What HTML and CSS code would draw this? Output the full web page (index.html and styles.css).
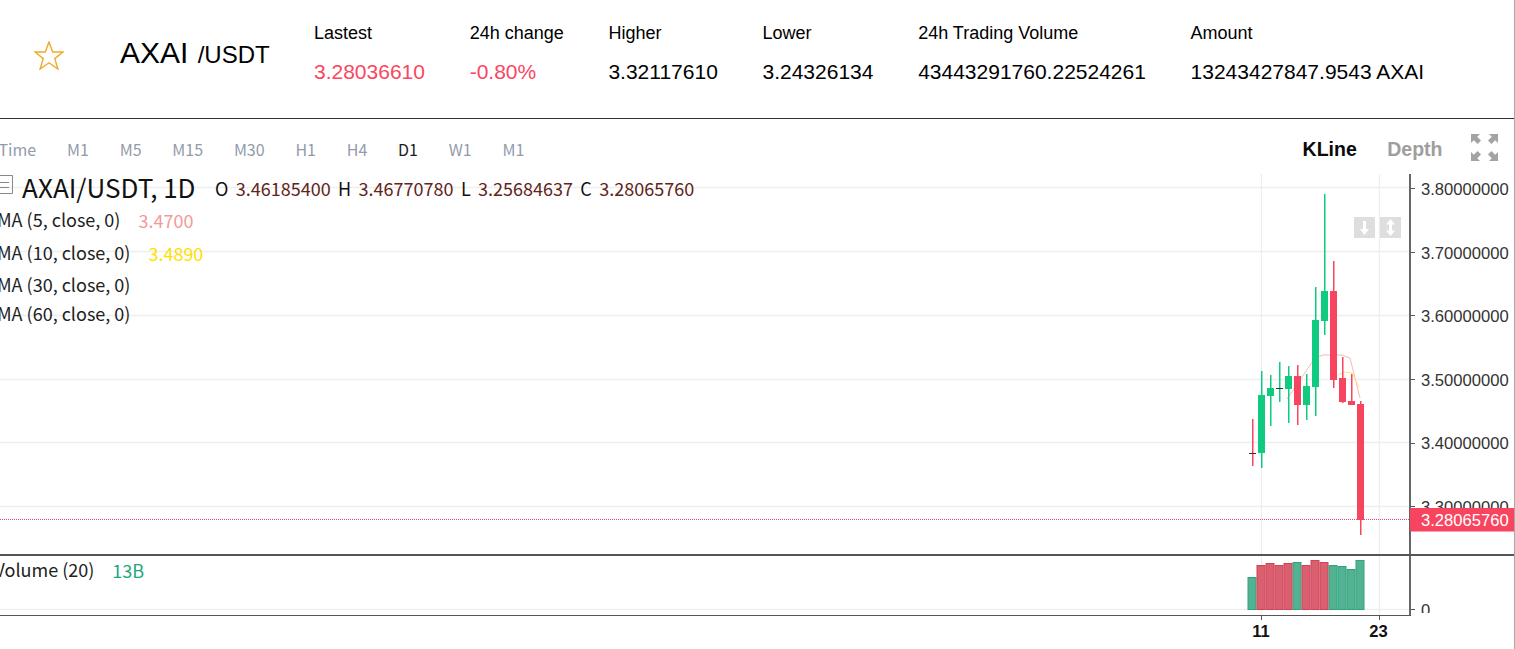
FILE: index.html
```html
<!DOCTYPE html>
<html lang="en">
<head>
<meta charset="utf-8">
<title>AXAI/USDT</title>
<link rel="stylesheet" href="styles.css">
</head>
<body>
<div class="page">
  <header class="ticker">
    <svg class="star" viewBox="0 0 30 29" width="30" height="29"><polygon points="15,1 18.7,11 29,11 20.8,17.6 23.9,28 15,21.8 6.1,28 9.2,17.6 1,11 11.3,11" fill="none" stroke="#f0a92a" stroke-width="1.4"/></svg>
    <h1 class="pair">AXAI <small>/USDT</small></h1>
    <div class="stats">
      <div class="stat"><span class="label">Lastest</span><span class="value down">3.28036610</span></div>
      <div class="stat"><span class="label">24h change</span><span class="value down">-0.80%</span></div>
      <div class="stat"><span class="label">Higher</span><span class="value">3.32117610</span></div>
      <div class="stat"><span class="label">Lower</span><span class="value">3.24326134</span></div>
      <div class="stat"><span class="label">24h Trading Volume</span><span class="value">43443291760.22524261</span></div>
      <div class="stat"><span class="label">Amount</span><span class="value">13243427847.9543 AXAI</span></div>
    </div>
  </header>
  <section class="panel">
    <div class="toolbar">
      <nav class="periods">
        <span>Time</span><span>M1</span><span>M5</span><span>M15</span><span>M30</span><span>H1</span><span>H4</span><span class="on">D1</span><span>W1</span><span>M1</span>
      </nav>
      <div class="views">
        <span class="view on">KLine</span>
        <span class="view">Depth</span>
        <svg class="expand" viewBox="0 0 27 27" width="27" height="27" fill="#a3a3a3">
          <polygon points="0,0 9,0 6.2,2.8 10,6.6 6.6,10 2.8,6.2 0,9"/>
          <polygon points="27,0 18,0 20.8,2.8 17,6.6 20.4,10 24.2,6.2 27,9"/>
          <polygon points="0,27 9,27 6.2,24.2 10,20.4 6.6,17 2.8,20.8 0,18"/>
          <polygon points="27,27 18,27 20.8,24.2 17,20.4 20.4,17 24.2,20.8 27,18"/>
        </svg>
      </div>
    </div>
    <div class="chart">
      <svg class="plot" viewBox="0 174 1515 475" width="1515" height="475">
        <defs><clipPath id="volclip"><rect x="1410" y="556" width="105" height="57"/></clipPath></defs>
        <g class="grid">
          <path d="M0 187.5H1410M0 251.5H1410M0 315.5H1410M0 379.5H1410M0 442.5H1410M0 506.5H1410M0 609.5H1410M1261.5 174V615M1379.5 174V615"/>
        </g>
        <path class="ma5" d="M1287 399L1315 358L1323 355H1342L1350 358L1360 398"/>
        <path class="ma10" d="M1338 375L1345 372L1352 373L1359 387"/>
        <g class="up">
          <rect x="1261" y="371" width="1.5" height="97"/><rect x="1258" y="395" width="7" height="58"/>
          <rect x="1270" y="375" width="1.5" height="51"/><rect x="1267" y="388" width="7" height="8"/>
          <rect x="1288" y="366" width="1.5" height="57"/><rect x="1285" y="376" width="7" height="13"/>
          <rect x="1306" y="374" width="1.5" height="46"/><rect x="1303" y="386" width="7" height="19"/>
          <rect x="1315" y="287" width="1.5" height="129"/><rect x="1312" y="320" width="7" height="67"/>
          <rect x="1324" y="194" width="1.5" height="141"/><rect x="1321" y="291" width="7" height="30"/>
          <rect x="1279" y="362" width="1.5" height="40"/>
        </g>
        <g class="dn">
          <rect x="1252" y="419" width="1.5" height="47"/>
          <rect x="1297" y="365" width="1.5" height="60"/><rect x="1294" y="376" width="7" height="29"/>
          <rect x="1333" y="261" width="1.5" height="127"/><rect x="1330" y="291" width="7" height="89"/>
          <rect x="1342" y="357" width="1.5" height="46"/><rect x="1339" y="378" width="7" height="24"/>
          <rect x="1351" y="374" width="1.5" height="31"/><rect x="1348" y="401" width="7" height="4"/>
          <rect x="1360" y="401" width="1.5" height="134"/><rect x="1357" y="404" width="7" height="116"/>
        </g>
        <path class="doji" d="M1249 453.5H1256M1276 388.5H1283"/>
        <g class="vol-up">
          <rect x="1248" y="577.5" width="8" height="32"/><rect x="1293" y="562.5" width="8" height="47"/>
          <rect x="1329" y="565.5" width="8" height="44"/><rect x="1338" y="566.5" width="8" height="43"/>
          <rect x="1347" y="569.5" width="8" height="40"/><rect x="1356" y="560.5" width="8" height="49"/>
        </g>
        <g class="vol-dn">
          <rect x="1257" y="565.5" width="8" height="44"/><rect x="1266" y="563.5" width="8" height="46"/>
          <rect x="1275" y="565.5" width="8" height="44"/><rect x="1284" y="563.5" width="8" height="46"/>
          <rect x="1302" y="565.5" width="8" height="44"/><rect x="1311" y="560.5" width="8" height="49"/>
          <rect x="1320" y="562.5" width="8" height="47"/>
        </g>
        <path class="lastline" d="M0 519.5H1410"/>
        <path class="frame" d="M1410 174V616"/>
        <path class="divider" d="M0 555H1515"/>
        <path class="baseline" d="M0 615.5H1411"/>
        <path class="ticks" d="M1411 188.5H1415M1411 252.5H1415M1411 315.5H1415M1411 379.5H1415M1411 443.5H1415M1411 506.5H1415M1411 609.5H1415M1261.5 616V620M1379.5 616V620"/>
        <g class="ylabels">
          <text x="1421" y="195">3.80000000</text>
          <text x="1421" y="259">3.70000000</text>
          <text x="1421" y="322">3.60000000</text>
          <text x="1421" y="386">3.50000000</text>
          <text x="1421" y="449">3.40000000</text>
          <text x="1421" y="513">3.30000000</text>
          <text x="1421" y="616" clip-path="url(#volclip)">0</text>
        </g>
        <rect class="pricebox" x="1410" y="508" width="105" height="23.5"/>
        <text class="pricetext" x="1421" y="525.5">3.28065760</text>
        <g class="xlabels">
          <text x="1261" y="636.5">11</text>
          <text x="1378.5" y="636.5">23</text>
        </g>
      </svg>
      <div class="legend">
        <div class="legend-main">
          <svg class="collapse" viewBox="0 0 13 19" width="13" height="19"><path d="M0 .5H12.5V18.5H0M0 7.5H9M0 12.5H9" fill="none" stroke="#888"/></svg>
          <span class="symbol">AXAI/USDT, 1D</span>
          <span class="ohlc"><b>O</b><i>3.46185400</i><b>H</b><i>3.46770780</i><b>L</b><i>3.25684637</i><b>C</b><i>3.28065760</i></span>
        </div>
        <div class="ma-row r1">MA (5, close, 0)<em class="pink">3.4700</em></div>
        <div class="ma-row r2">MA (10, close, 0)<em class="yellow">3.4890</em></div>
        <div class="ma-row r3">MA (30, close, 0)</div>
        <div class="ma-row r4">MA (60, close, 0)</div>
      </div>
      <div class="volume-legend">Volume (20)<em>13B</em></div>
      <div class="side-btns">
        <span class="side-btn"><svg viewBox="0 0 21 21" width="21" height="21"><path d="M9 4H12V12H15L10.5 18L6 12H9Z" fill="#fff"/></svg></span>
        <span class="side-btn"><svg viewBox="0 0 21 21" width="21" height="21"><path d="M10.5 2L15 7.5H12V13.5H15L10.5 19L6 13.5H9V7.5H6Z" fill="#fff"/></svg></span>
      </div>
    </div>
  </section>
</div>
</body>
</html>
```
FILE: styles.css
```css
* { box-sizing: border-box; }
html, body { margin: 0; padding: 0; height: 100%; background: #fff; overflow: hidden; }
.page {
  width: 1515px;
  height: 649px;
  display: flex;
  flex-direction: column;
  border-right: 1px solid #a9a9a9;
  font-family: "Liberation Sans", Arial, sans-serif;
  color: #000;
  overflow: hidden;
}
.ticker {
  height: 119px;
  flex: none;
  display: flex;
  align-items: center;
  padding: 0 0 11px 34px;
  border-bottom: 1px solid #333;
}
.star { flex: none; margin-right: 56px; margin-top: 3px; }
.pair { margin: 0; width: 194px; flex: none; font-size: 30px; font-weight: 400; line-height: 36px; margin-top: 1px; }
.pair small { font-size: 24px; margin-left: 1px; }
.stats { display: flex; gap: 44.7px; }
.stat { display: flex; flex-direction: column; gap: 16px; }
.label { font-size: 18px; line-height: 21px; }
.value { font-size: 21px; line-height: 24px; }
.down { color: #f8475f; }

.panel { flex: 1; display: flex; flex-direction: column; min-height: 0; }
.toolbar {
  height: 55px;
  flex: none;
  display: flex;
  align-items: center;
  justify-content: space-between;
  padding: 5px 16px 0 0;
}
.periods {
  display: flex;
  gap: 30.8px;
  margin-left: -1.5px;
  font-family: "Noto Sans CJK SC", "Noto Sans", sans-serif;
  font-size: 16px;
  color: #929bab;
}
.periods .on { color: #1c1c1c; }
.views { display: flex; align-items: center; }
.view { font-size: 19.5px; font-weight: 700; color: #9e9e9e; margin-right: 28.5px; }
.view.on { color: #0a0a0a; margin-right: 30.5px; }
.expand { flex: none; margin-top: -4px; }

.chart { position: relative; flex: 1; min-height: 0; }
.plot { position: absolute; left: 0; top: 0; display: block; }
.grid path { stroke: #eeeeee; stroke-width: 1.3; fill: none; }
.ma5 { fill: none; stroke: #f7b9b9; stroke-width: 1; }
.ma10 { fill: none; stroke: #ffe680; stroke-width: 1; }
.up rect { fill: #0fcb80; }
.dn rect { fill: #f8455f; }
.doji { stroke: #333; fill: none; }
.vol-up rect { fill: #52b292; stroke: #2ea47c; }
.vol-dn rect { fill: #da6070; stroke: #d04358; }
.lastline { stroke: #f8455f; stroke-dasharray: 1 1; fill: none; }
.frame { stroke: #666; stroke-width: 2; fill: none; }
.divider { stroke: #555; stroke-width: 2; fill: none; }
.baseline { stroke: #555; fill: none; }
.ticks { stroke: #555; fill: none; }
.ylabels text { font-size: 16.6px; fill: #333; }
.pricebox { fill: #f8455f; }
.pricetext { font-size: 16.6px; fill: #fff; }
.xlabels text { font-size: 16.6px; font-weight: 700; fill: #111; text-anchor: middle; }

.legend, .volume-legend {
  font-family: "Noto Sans CJK SC", "Noto Sans", sans-serif;
}
.legend { position: absolute; left: 0; top: 0; }
.legend-main {
  position: absolute;
  left: 0;
  top: -2px;
  height: 30px;
  display: flex;
  align-items: center;
  white-space: nowrap;
}
.collapse { flex: none; margin: 3px 9px 0 0; align-self: flex-start; }
.symbol { font-size: 26px; line-height: 30px; color: #111; margin-right: 19.5px; }
.ohlc { font-size: 18px; display: flex; gap: 7.4px; margin-top: 2px; }
.ohlc b { font-weight: 400; color: #111; }
.ohlc i { font-style: normal; color: #5f2420; }
.ma-row {
  position: absolute;
  left: -3px;
  font-size: 18px;
  line-height: 24px;
  color: #222;
  white-space: nowrap;
}
.ma-row em { font-style: normal; margin-left: 18px; vertical-align: -1px; }
.r1 { top: 33px; }
.r2 { top: 66px; }
.r3 { top: 98px; }
.r4 { top: 127px; }
.pink { color: #f29a9a; }
.yellow { color: #ffe000; }
.volume-legend {
  position: absolute;
  left: -5.5px;
  top: 383px;
  font-size: 18px;
  line-height: 24px;
  color: #222;
  white-space: nowrap;
}
.volume-legend em { font-style: normal; color: #1da57c; margin-left: 18px; vertical-align: -1px; }
.side-btns { position: absolute; left: 1354px; top: 43px; display: flex; gap: 5px; }
.side-btn { width: 21px; height: 21px; background: #dedede; display: block; }
.side-btn svg { display: block; }
```
